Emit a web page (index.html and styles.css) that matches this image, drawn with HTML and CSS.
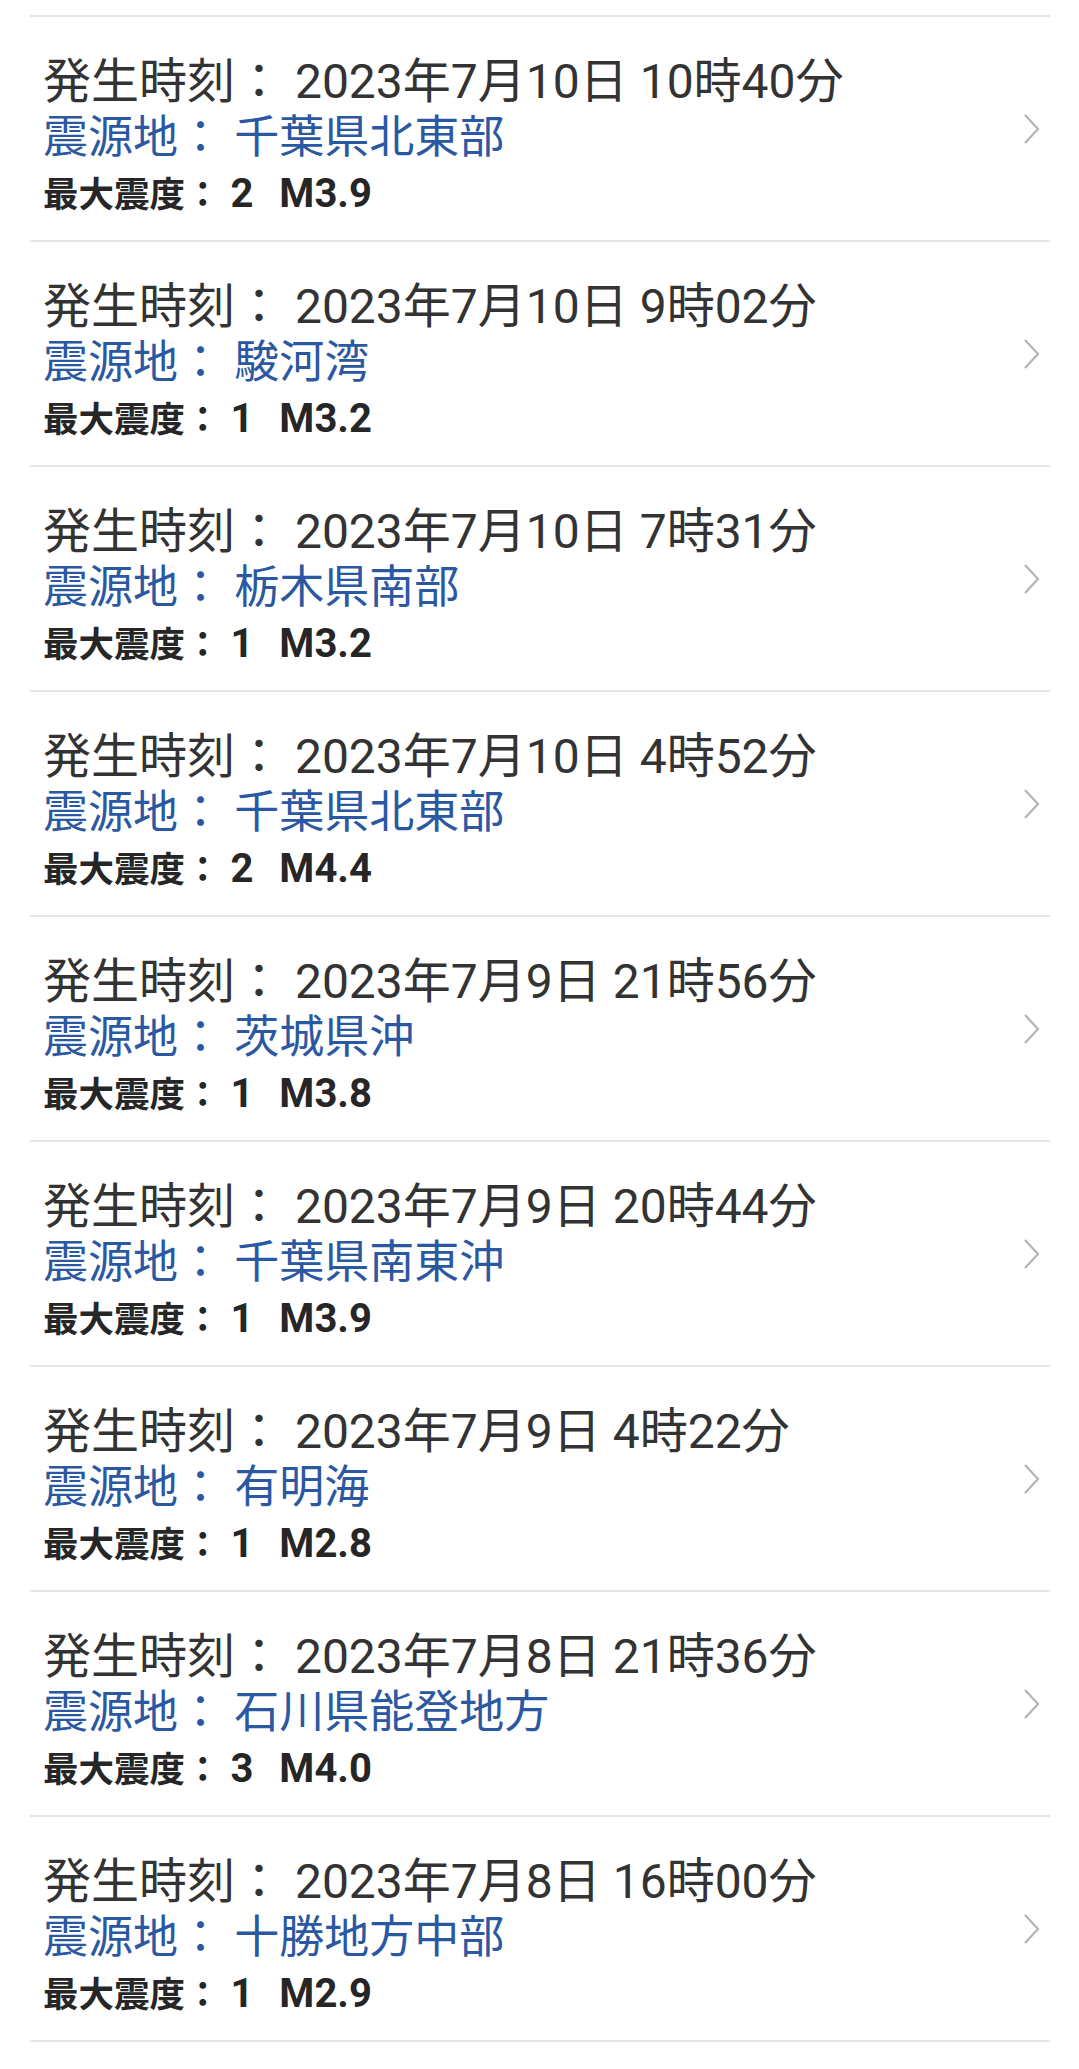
FILE: index.html
```html
<!DOCTYPE html>
<html lang="ja">
<head>
<meta charset="utf-8">
<title>地震情報</title>
<link rel="stylesheet" href="styles.css">
</head>
<body>
<ul class="quake-list">
  <li class="quake">
    <div class="info">
      <div class="time">発生時刻： 2023年7月10日 10時40分</div>
      <div class="place">震源地： 千葉県北東部</div>
      <div class="scale"><span class="label">最大震度：</span> 2 <span class="mag">M3.9</span></div>
    </div>
    <svg class="chev" viewBox="0 0 18 32" width="18" height="32"><polyline points="2,2 15,16 2,30"/></svg>
  </li>
  <li class="quake">
    <div class="info">
      <div class="time">発生時刻： 2023年7月10日 9時02分</div>
      <div class="place">震源地： 駿河湾</div>
      <div class="scale"><span class="label">最大震度：</span> 1 <span class="mag">M3.2</span></div>
    </div>
    <svg class="chev" viewBox="0 0 18 32" width="18" height="32"><polyline points="2,2 15,16 2,30"/></svg>
  </li>
  <li class="quake">
    <div class="info">
      <div class="time">発生時刻： 2023年7月10日 7時31分</div>
      <div class="place">震源地： 栃木県南部</div>
      <div class="scale"><span class="label">最大震度：</span> 1 <span class="mag">M3.2</span></div>
    </div>
    <svg class="chev" viewBox="0 0 18 32" width="18" height="32"><polyline points="2,2 15,16 2,30"/></svg>
  </li>
  <li class="quake">
    <div class="info">
      <div class="time">発生時刻： 2023年7月10日 4時52分</div>
      <div class="place">震源地： 千葉県北東部</div>
      <div class="scale"><span class="label">最大震度：</span> 2 <span class="mag">M4.4</span></div>
    </div>
    <svg class="chev" viewBox="0 0 18 32" width="18" height="32"><polyline points="2,2 15,16 2,30"/></svg>
  </li>
  <li class="quake">
    <div class="info">
      <div class="time">発生時刻： 2023年7月9日 21時56分</div>
      <div class="place">震源地： 茨城県沖</div>
      <div class="scale"><span class="label">最大震度：</span> 1 <span class="mag">M3.8</span></div>
    </div>
    <svg class="chev" viewBox="0 0 18 32" width="18" height="32"><polyline points="2,2 15,16 2,30"/></svg>
  </li>
  <li class="quake">
    <div class="info">
      <div class="time">発生時刻： 2023年7月9日 20時44分</div>
      <div class="place">震源地： 千葉県南東沖</div>
      <div class="scale"><span class="label">最大震度：</span> 1 <span class="mag">M3.9</span></div>
    </div>
    <svg class="chev" viewBox="0 0 18 32" width="18" height="32"><polyline points="2,2 15,16 2,30"/></svg>
  </li>
  <li class="quake">
    <div class="info">
      <div class="time">発生時刻： 2023年7月9日 4時22分</div>
      <div class="place">震源地： 有明海</div>
      <div class="scale"><span class="label">最大震度：</span> 1 <span class="mag">M2.8</span></div>
    </div>
    <svg class="chev" viewBox="0 0 18 32" width="18" height="32"><polyline points="2,2 15,16 2,30"/></svg>
  </li>
  <li class="quake">
    <div class="info">
      <div class="time">発生時刻： 2023年7月8日 21時36分</div>
      <div class="place">震源地： 石川県能登地方</div>
      <div class="scale"><span class="label">最大震度：</span> 3 <span class="mag">M4.0</span></div>
    </div>
    <svg class="chev" viewBox="0 0 18 32" width="18" height="32"><polyline points="2,2 15,16 2,30"/></svg>
  </li>
  <li class="quake">
    <div class="info">
      <div class="time">発生時刻： 2023年7月8日 16時00分</div>
      <div class="place">震源地： 十勝地方中部</div>
      <div class="scale"><span class="label">最大震度：</span> 1 <span class="mag">M2.9</span></div>
    </div>
    <svg class="chev" viewBox="0 0 18 32" width="18" height="32"><polyline points="2,2 15,16 2,30"/></svg>
  </li>
</ul>
</body>
</html>
```

FILE: styles.css
```css
html, body {
  margin: 0;
  padding: 0;
  background: #ffffff;
}

body {
  font-family: "Roboto", "Noto Sans CJK JP", sans-serif;
  color: #333333;
}

.quake-list {
  list-style: none;
  margin: 0 29px 0 30px;
  padding: 15px 0 0 0;
}

.quake {
  display: flex;
  align-items: center;
  justify-content: space-between;
  height: 223px;
  border-top: 2px solid #e6e6e6;
  padding: 0 9px 0 13px;
}

.quake:last-child {
  border-bottom: 2px solid #e6e6e6;
}

.info {
  display: flex;
  flex-direction: column;
  padding-top: 20px;
}

.time {
  font-size: 48px;
  line-height: 56px;
  color: #333333;
}

.place {
  font-size: 45px;
  line-height: 56px;
  color: #2b58a2;
}

.scale {
  font-size: 40px;
  line-height: 56px;
  font-weight: bold;
  color: #262626;
}

.label {
  font-size: 35.5px;
}

.mag {
  margin-left: 16px;
}

.chev {
  flex: none;
  fill: none;
  stroke: #b4b4b4;
  stroke-width: 2.2;
}
```
